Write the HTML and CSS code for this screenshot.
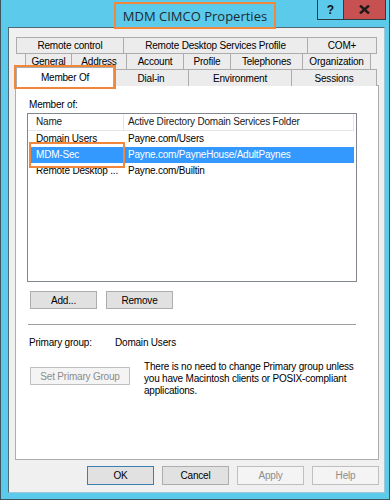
FILE: index.html
```html
<!DOCTYPE html>
<html>
<head>
<meta charset="utf-8">
<link rel="stylesheet" href="styles.css">
</head>
<body>
<div class="window">
  <div class="titlebar">
    <div class="tb-spacer"></div>
    <div class="title">MDM CIMCO Properties</div>
    <div class="controls">
      <div class="ctl help">?</div>
      <div class="ctl close">
        <svg width="11" height="9" viewBox="0 0 11 9"><path d="M1 0.5 L10 8.5 M10 0.5 L1 8.5" stroke="#1b1b1b" stroke-width="2.4" fill="none"/></svg>
      </div>
    </div>
  </div>
  <div class="client">
    <div class="tabs">
      <div class="tabrow row1">
        <div class="tab t-rc">Remote control</div>
        <div class="tab t-rds">Remote Desktop Services Profile</div>
        <div class="tab t-com">COM+</div>
      </div>
      <div class="tabrow row2">
        <div class="tab t-gen">General</div>
        <div class="tab t-addr">Address</div>
        <div class="tab t-acct">Account</div>
        <div class="tab t-prof">Profile</div>
        <div class="tab t-tel">Telephones</div>
        <div class="tab t-org">Organization</div>
      </div>
      <div class="tabrow row3">
        <div class="tab t-mem selected">Member Of</div>
        <div class="tab t-dial">Dial-in</div>
        <div class="tab t-env">Environment</div>
        <div class="tab t-ses">Sessions</div>
      </div>
    </div>
    <div class="panel">
      <div class="label">Member of:</div>
      <div class="listview">
        <div class="lv-header">
          <div class="hc c1">Name</div>
          <div class="hc c2">Active Directory Domain Services Folder</div>
        </div>
        <div class="row">
          <div class="cell c1">Domain Users</div>
          <div class="cell c2">Payne.com/Users</div>
        </div>
        <div class="row sel">
          <div class="cell c1 marked">MDM-Sec</div>
          <div class="cell c2">Payne.com/PayneHouse/AdultPaynes</div>
        </div>
        <div class="row">
          <div class="cell c1">Remote Desktop ...</div>
          <div class="cell c2">Payne.com/Builtin</div>
        </div>
      </div>
      <div class="btnrow">
        <div class="btn">Add...</div>
        <div class="btn">Remove</div>
      </div>
      <div class="sep"></div>
      <div class="primary">
        <div class="pg-label">Primary group:</div>
        <div class="pg-value">Domain Users</div>
      </div>
      <div class="setrow">
        <div class="btn disabled setbtn">Set Primary Group</div>
        <div class="desc">There is no need to change Primary group unless you have Macintosh clients or POSIX-compliant applications.</div>
      </div>
    </div>
    <div class="dlgbtns">
      <div class="btn dbtn default">OK</div>
      <div class="btn dbtn">Cancel</div>
      <div class="btn dbtn disabled">Apply</div>
      <div class="btn dbtn disabled">Help</div>
    </div>
  </div>
</div>
</body>
</html>
```
FILE: styles.css
```css
* { box-sizing: border-box; }
html, body { margin: 0; padding: 0; }
body {
  width: 390px;
  height: 500px;
  overflow: hidden;
  background: #ffffff;
  font-family: "Liberation Sans", Arial, sans-serif;
  font-size: 10px;
  letter-spacing: -0.2px;
  color: #000;
}
.window {
  width: 390px;
  height: 500px;
  background: #5ccbeb;
  border-left: 1px solid #3e5560;
  border-right: 1px solid #3e5560;
  border-bottom: 1px solid #3e5560;
  display: flex;
  flex-direction: column;
}
.titlebar {
  height: 27px;
  flex: none;
  display: grid;
  grid-template-columns: 1fr auto 1fr;
  align-items: start;
}
.title {
  margin-top: 2px;
  width: 162px;
  height: 27px;
  border: 2px solid #f0873a;
  font-family: "Open Sans", "Noto Sans", sans-serif;
  font-size: 13px;
  letter-spacing: 0;
  color: #1c2a31;
  display: flex;
  align-items: center;
  justify-content: center;
  position: relative;
  z-index: 2;
}
.controls {
  justify-self: end;
  margin-right: 3px;
  display: flex;
}
.ctl {
  height: 20px;
  display: flex;
  align-items: center;
  justify-content: center;
  border: 1px solid #2d3d44;
  border-top: none;
}
.help {
  width: 27px;
  font-weight: bold;
  font-size: 12px;
  letter-spacing: 0;
  color: #111;
}
.close {
  width: 42px;
  background: #c75050;
  border-left: none;
}
.client {
  flex: 1;
  margin: 0 4px 6px 7px;
  background: #f0f0f0;
  border: 1px solid #4f6a76;
  border-bottom-color: #9fc9d8;
  border-right-color: #9fc9d8;
  padding: 9px 5px 0 6px;
  display: flex;
  flex-direction: column;
}
.tabs {
  display: flex;
  flex-direction: column;
  position: relative;
  z-index: 1;
}
.tabrow {
  display: flex;
  height: 17px;
}
.row2, .row3 { margin-top: -1px; }
.row1 { margin-left: 1px; }
.row2 { margin-left: 10px; }
.row3 { margin-left: 1px; align-items: flex-end; }
.tab {
  height: 17px;
  background: #ececec;
  border: 1px solid #acacac;
  margin-left: -1px;
  display: flex;
  align-items: center;
  justify-content: center;
  white-space: nowrap;
  color: #000;
}
.tab:first-child { margin-left: 0; }
.row3 .tab { border-bottom: none; }
.tab.selected {
  background: #ffffff;
  margin-bottom: -1px;
  height: 20px;
  position: relative;
  z-index: 2;
  outline: 2px solid #f0873a;
}
.t-rc { width: 108px; }
.t-rds { width: 185px; }
.t-com { width: 70px; }
.t-gen { width: 47px; }
.t-addr { width: 56px; }
.t-acct { width: 58px; }
.t-prof { width: 48px; }
.t-tel { width: 73px; }
.t-org { width: 69px; }
.t-mem { width: 98px; }
.t-dial { width: 76px; }
.t-env { width: 104px; }
.t-ses { width: 86px; }
.panel {
  width: 364px;
  height: 375px;
  margin-top: -1px;
  background: #ffffff;
  border: 1px solid #adadad;
  padding-top: 13px;
  display: flex;
  flex-direction: column;
}
.label {
  height: 12px;
  line-height: 12px;
  margin-left: 13px;
}
.listview {
  margin-top: 2px;
  margin-left: 11px;
  width: 330px;
  height: 169px;
  border: 1px solid #828790;
  background: #fff;
}
.lv-header {
  display: flex;
  height: 17px;
  width: 326px;
  border-bottom: 1px solid #e5e5e5;
}
.hc {
  height: 16px;
  line-height: 16px;
  border-right: 1px solid #e5e5e5;
  white-space: nowrap;
  color: #1a1a1a;
}
.c1 { width: 96px; padding-left: 8px; }
.c2 { width: 230px; padding-left: 4px; }
.row {
  display: flex;
  width: 326px;
  height: 16px;
  line-height: 16px;
}
.cell { white-space: nowrap; overflow: hidden; }
.row.sel {
  margin-left: 2px;
  width: 324px;
  background: #3399ff;
  color: #ffffff;
}
.row.sel .c1 { width: 94px; padding-left: 6px; }
.marked { position: relative; overflow: visible; }
.marked::after {
  content: "";
  position: absolute;
  left: -1px;
  top: -5px;
  width: 92px;
  height: 22px;
  border: 2px solid #f0873a;
}
.btn {
  height: 18px;
  background: #e1e1e1;
  border: 1px solid #adadad;
  display: flex;
  align-items: center;
  justify-content: center;
  white-space: nowrap;
  color: #000;
}
.btn.disabled {
  background: #f4f4f4;
  border-color: #bfbfbf;
  color: #8c8c8c;
}
.btnrow {
  display: flex;
  gap: 9px;
  margin-top: 9px;
  margin-left: 14px;
}
.btnrow .btn { width: 67px; }
.sep {
  margin-top: 15px;
  margin-left: 12px;
  width: 328px;
  height: 1px;
  background: #a0a0a0;
}
.primary {
  display: flex;
  margin-top: 12px;
  margin-left: 13px;
  height: 12px;
  line-height: 12px;
}
.pg-label { width: 86px; }
.setrow {
  display: flex;
  align-items: flex-start;
  margin-top: 12px;
  margin-left: 14px;
  gap: 14px;
}
.setbtn {
  width: 100px;
  margin-top: 6px;
}
.desc {
  width: 210px;
  line-height: 12px;
}
.dlgbtns {
  display: flex;
  justify-content: flex-end;
  gap: 8px;
  margin-top: 6px;
}
.dbtn { width: 67px; height: 19px; }
.btn.default { border-color: #3c7fb1; }
```
